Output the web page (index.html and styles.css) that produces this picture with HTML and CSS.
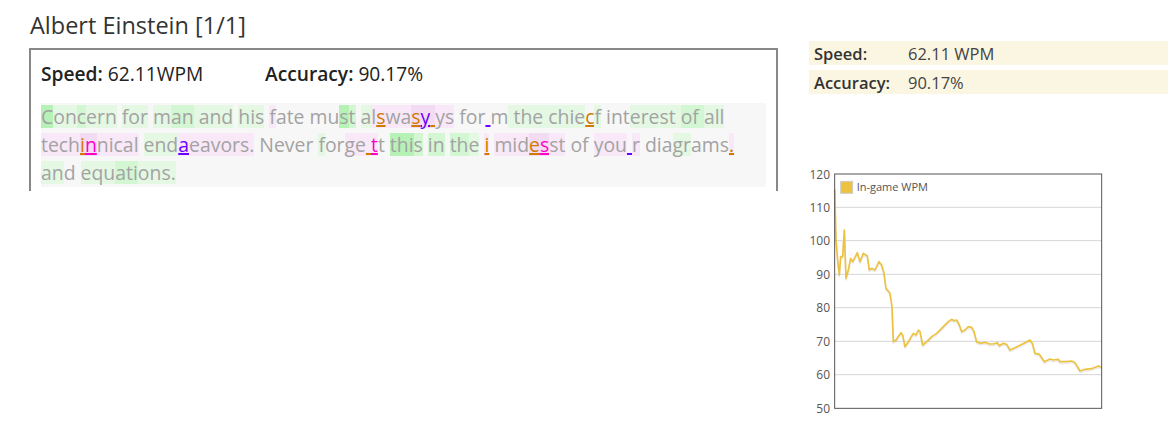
FILE: index.html
```html
<!DOCTYPE html>
<html>
<head>
<meta charset="utf-8">
<link rel="stylesheet" href="styles.css">
</head>
<body>
<div class="page">
  <div class="left">
    <h1 class="title">Albert Einstein [1/1]</h1>
    <div class="box">
      <div class="stats">
        <span class="stat"><b>Speed:</b> 62.11WPM</span>
        <span class="stat"><b>Accuracy:</b> 90.17%</span>
      </div>
      <div class="typed">
        <div class="ln"><span class="c">C</span><span class="a">on</span><span class="b">c</span><span class="a">ern</span> <span class="a">for</span> <span class="a">m</span><span class="b">an</span><span class="a"> and</span> <span class="a">his</span> <span class="p">f</span>ate mu<span class="c">s</span><span class="b">t</span> <span class="a">a</span><span class="p">l</span><span class="eo p">s</span><span class="p">wa</span><span class="eo q">s</span><span class="ep q">y</span><span class="eo q"> </span><span class="p">ys</span> for<span class="ep"> </span>m<span class="a"> the chie</span><span class="eo">c</span><span class="a">f</span> int<span class="a">erest </span><span class="b">of </span><span class="a">all</span></div>
        <div class="ln"><span class="p">tech</span><span class="eo q">i</span><span class="em q">n</span><span class="p">nical</span> <span class="a">end</span><span class="ep p">a</span><span class="p">eavors.</span> Never <span class="a">f</span>or<span class="p">ge</span><span class="eo p"> </span><span class="em p">t</span>t <span class="c">thi</span><span class="b">s</span> <span class="b">in</span> <span class="b">th</span><span class="a">e</span> <span class="eo p">i</span> <span class="p">mid</span><span class="eo q">e</span><span class="em q">s</span><span class="p">st</span> of <span class="p">you</span><span class="ep"> </span><span class="p">r</span> dia<span class="a">gr</span>ams<span class="eo p">.</span></div>
        <div class="ln"><span class="a">an</span>d <span class="a">equ</span><span class="b">ati</span><span class="a">ons.</span></div>
      </div>
    </div>
  </div>
  <div class="right">
    <div class="summary">
      <div class="row"><span class="lbl">Speed:</span><span class="val">62.11 WPM</span></div>
      <div class="row"><span class="lbl">Accuracy:</span><span class="val">90.17%</span></div>
    </div>
    <svg class="chart" width="310" height="268" viewBox="0 0 930 804">
      <g class="grid">
        <line x1="104" y1="142" x2="905" y2="142"/>
        <line x1="104" y1="242" x2="905" y2="242"/>
        <line x1="104" y1="343" x2="905" y2="343"/>
        <line x1="104" y1="443" x2="905" y2="443"/>
        <line x1="104" y1="544" x2="905" y2="544"/>
        <line x1="104" y1="644" x2="905" y2="644"/>
      </g>
      <g class="ticks">
        <text x="90" y="56">120</text>
        <text x="90" y="156">110</text>
        <text x="90" y="256">100</text>
        <text x="90" y="357">90</text>
        <text x="90" y="457">80</text>
        <text x="90" y="558">70</text>
        <text x="90" y="658">60</text>
        <text x="90" y="759">50</text>
      </g>
      <polyline class="shadow" points="104,88 108,240 113,300 118,345 122,290 128,290 133,210 138,355 145,330 152,295 158,305 165,292 172,278 180,305 190,280 202,288 208,330 215,325 225,330 237,305 245,315 252,340 258,385 270,400 276,440 280,545 288,540 303,518 308,525 315,560 325,545 340,520 348,525 355,510 360,515 368,555 380,545 395,530 410,520 430,500 445,485 455,478 462,482 470,480 478,495 485,515 495,510 505,500 515,502 522,515 530,545 540,550 555,547 568,552 580,552 592,548 598,557 610,550 620,553 630,570 645,563 660,556 675,548 690,540 697,550 705,580 718,583 733,605 750,597 760,600 775,598 780,605 800,605 815,603 825,608 840,633 855,628 875,626 895,618 905,622"/>
      <polyline class="series" points="104,88 108,240 113,300 118,345 122,290 128,290 133,210 138,355 145,330 152,295 158,305 165,292 172,278 180,305 190,280 202,288 208,330 215,325 225,330 237,305 245,315 252,340 258,385 270,400 276,440 280,545 288,540 303,518 308,525 315,560 325,545 340,520 348,525 355,510 360,515 368,555 380,545 395,530 410,520 430,500 445,485 455,478 462,482 470,480 478,495 485,515 495,510 505,500 515,502 522,515 530,545 540,550 555,547 568,552 580,552 592,548 598,557 610,550 620,553 630,570 645,563 660,556 675,548 690,540 697,550 705,580 718,583 733,605 750,597 760,600 775,598 780,605 800,605 815,603 825,608 840,633 855,628 875,626 895,618 905,622"/>
      <rect class="frame" x="104" y="42" width="801" height="703"/>
      <rect class="legend-box" x="122" y="64" width="36" height="36"/>
      <text class="legend" x="170" y="94">In-game WPM</text>
    </svg>
  </div>
</div>
</body>
</html>
```

FILE: styles.css
```css
html, body {
  margin: 0;
  padding: 0;
  background: #ffffff;
}
body {
  font-family: "Open Sans", "Noto Sans", sans-serif;
  color: #333333;
  overflow: hidden;
}
.page {
  display: flex;
  gap: 22px;
  padding: 10px 0 0 29px;
  height: 418px;
}
.left {
  width: 749px;
  flex: none;
}
.title {
  margin: 0 0 8px 1px;
  font-size: 23.5px;
  font-weight: 400;
  line-height: 30px;
  color: #333333;
}
.box {
  border: 2px solid #888888;
  border-bottom: none;
  padding: 12px 10px 4px 10px;
}
.stats {
  display: flex;
  font-size: 19.2px;
  line-height: 24px;
  color: #222222;
}
.stats b {
  font-weight: 600;
}
.stat:first-child {
  width: 224px;
}
.typed {
  margin-top: 17px;
  background: #f7f7f7;
  font-size: 19.4px;
  line-height: 28px;
  color: #a3a3a3;
}
.ln {
  white-space: pre;
}
.a, .b, .c, .p, .q {
  background-image: linear-gradient(var(--hl), var(--hl));
  background-size: 100% 23px;
  background-position: 0 55%;
  background-repeat: no-repeat;
}
.a { --hl: #e4f8e4; }
.b { --hl: #d3f6d3; }
.c { --hl: #b6f1b6; }
.p { --hl: #f8e8f8; }
.q { --hl: #f3dbf3; }
.eo, .em, .ep {
  text-decoration: underline;
  text-decoration-thickness: 2px;
  text-underline-offset: 1px;
}
.eo { color: #d07a00; }
.em { color: #ff00cc; }
.ep { color: #6a00ff; }
.right {
  width: 368px;
  flex: none;
}
.summary {
  margin: 31px 0 0 9px;
  display: flex;
  flex-direction: column;
  gap: 5px;
}
.row {
  display: flex;
  height: 24px;
  align-items: center;
  background: #fbf6e2;
  font-size: 16.5px;
}
.lbl {
  width: 94px;
  padding-left: 5px;
  font-weight: 600;
  color: #333333;
}
.val {
  color: #444444;
}
.chart {
  display: block;
  margin-top: 66px;
}
.grid line {
  stroke: #d6d6d6;
  stroke-width: 3;
}
.ticks text {
  font-family: "Open Sans", sans-serif;
  font-size: 36px;
  fill: #555555;
  text-anchor: end;
}
.frame {
  fill: none;
  stroke: #555555;
  stroke-width: 3;
}
.series {
  fill: none;
  stroke: #edc240;
  stroke-width: 5;
  stroke-linejoin: round;
}
.shadow {
  fill: none;
  stroke: rgba(0, 0, 0, 0.08);
  stroke-width: 5;
  stroke-linejoin: round;
  transform: translate(0, 5px);
}
.legend-box {
  fill: #edc240;
  stroke: #cccccc;
  stroke-width: 3;
}
.legend {
  font-family: "Open Sans", sans-serif;
  font-size: 33px;
  fill: #545454;
}
```
